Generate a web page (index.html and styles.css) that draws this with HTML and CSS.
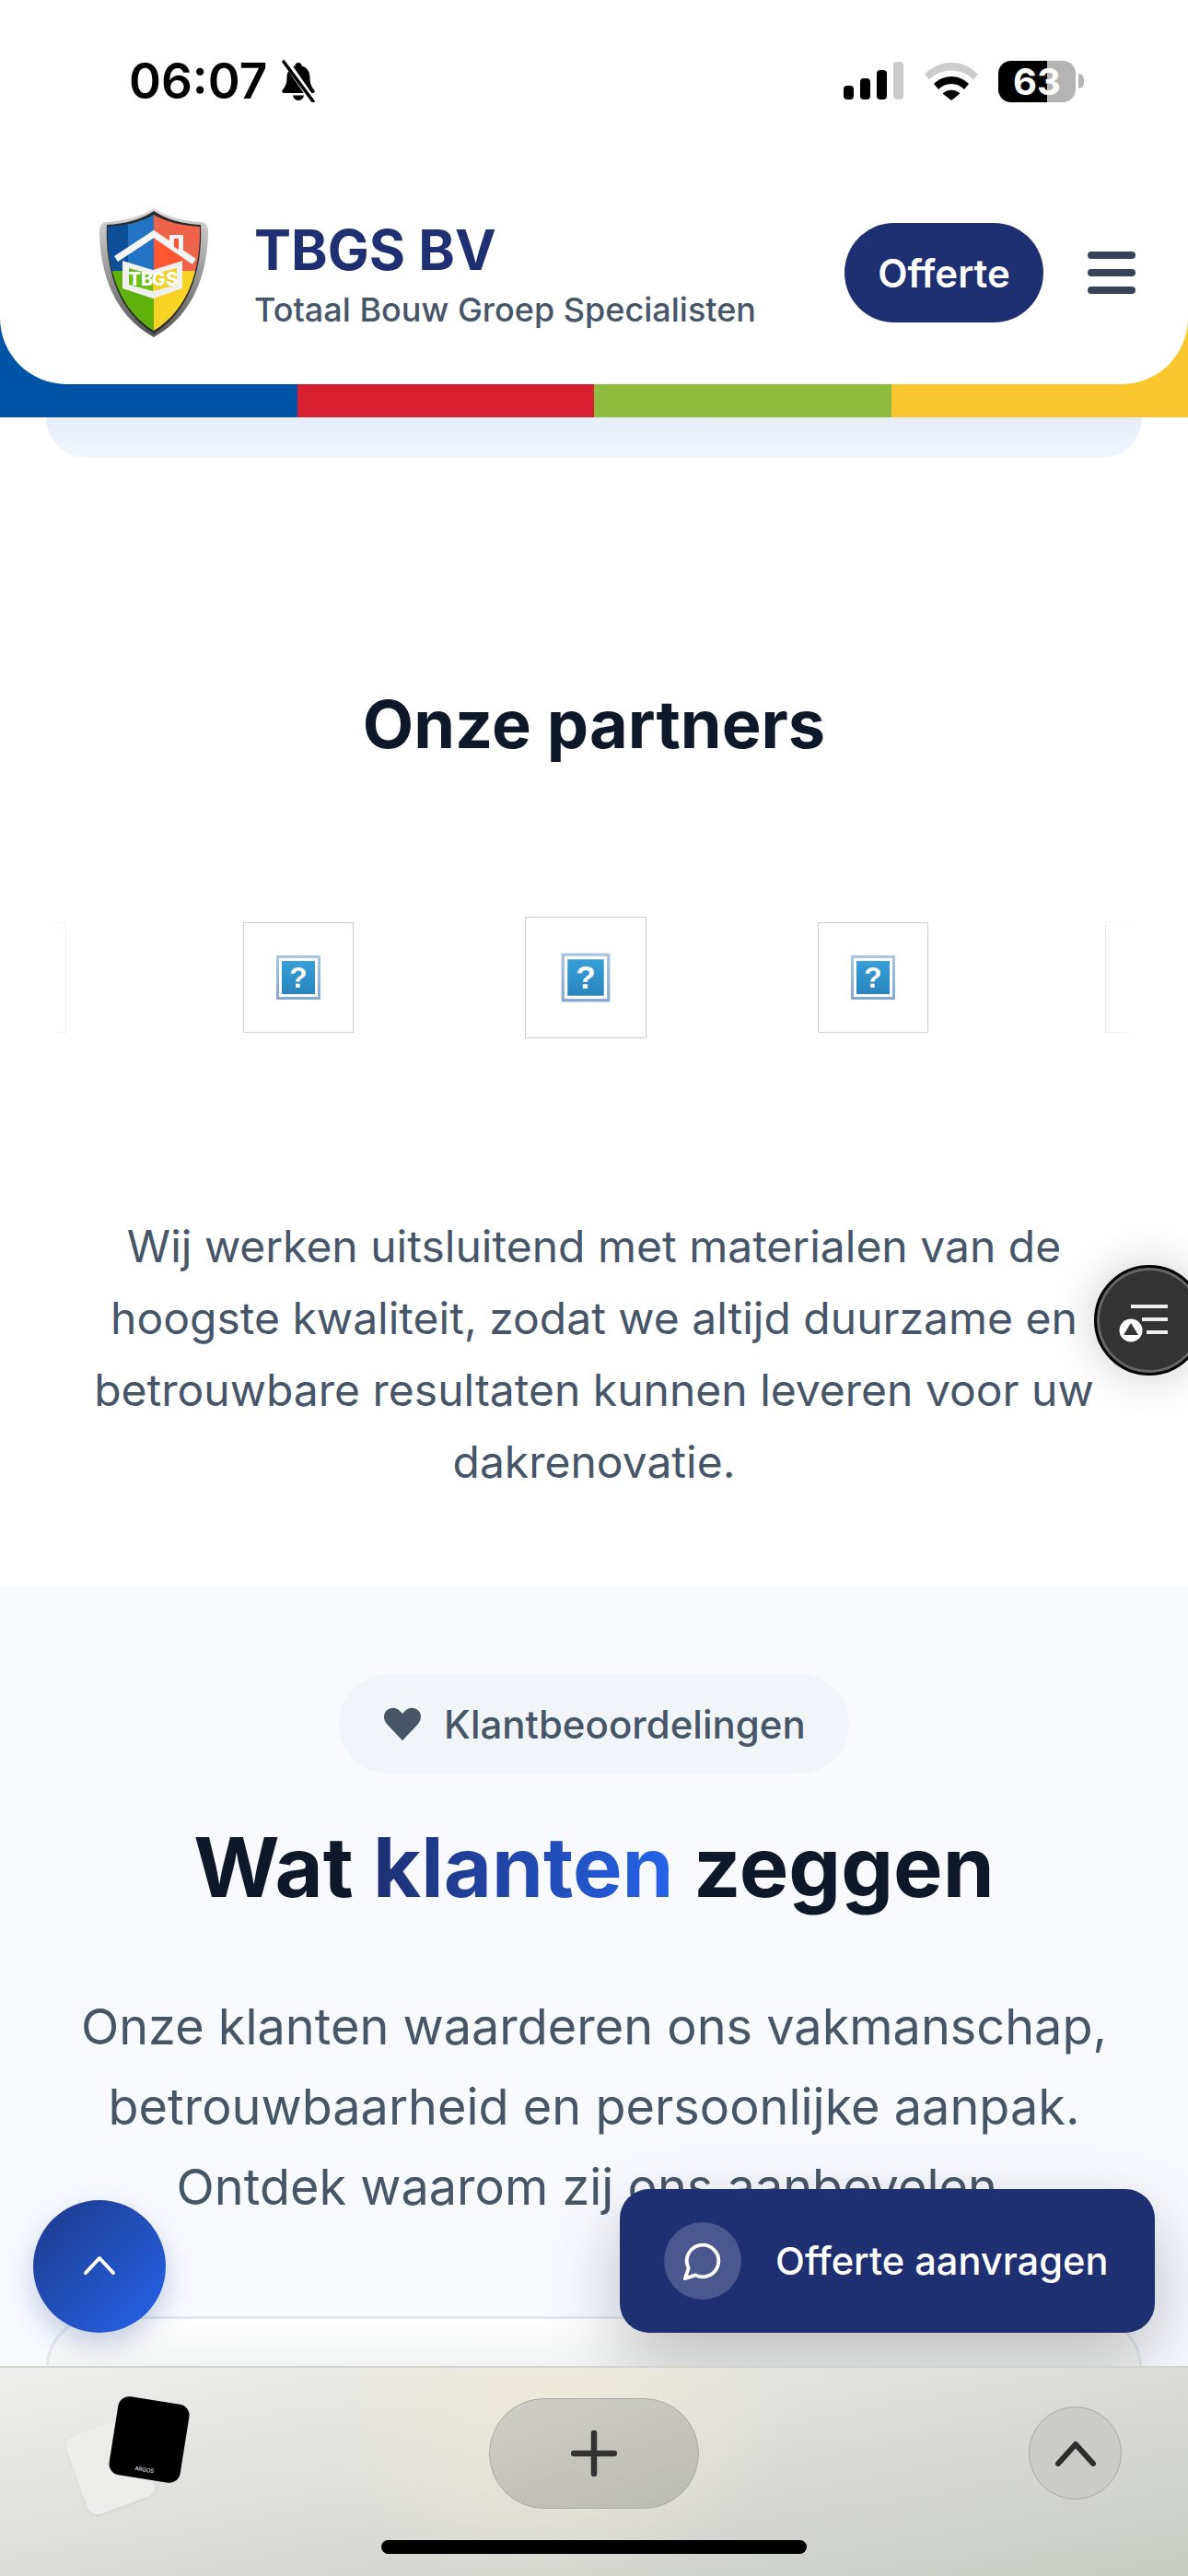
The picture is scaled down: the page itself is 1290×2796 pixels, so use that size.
FILE: index.html
```html
<!DOCTYPE html>
<html lang="nl">
<head>
    <meta charset="UTF-8">
    <meta name="viewport" content="width=device-width, initial-scale=1.0">
    <title>TBGS BV</title>
    <link rel="stylesheet" href="styles.css">
</head>
<body>
<div class="page">
    <div class="top-stripes">
        <header class="top">
            <div class="status-bar">
                <div class="status-left">
                    <span class="clock">06:07</span>
                    <svg class="bell" viewBox="0 0 44 46" width="44" height="46">
                        <path fill="#000" d="M22 3c-2 0-3.500 1.500-3.600 3.400C12.500 8 9.500 13 9.500 19c0 6-1.200 9.500-4.600 13.500-1.400 1.700-.4 3.500 1.600 3.500h31c2 0 3-1.800 1.600-3.500-3.400-4-4.600-7.500-4.600-13.500 0-6-3-11-8.900-12.600C25.500 4.500 24 3 22 3z"/>
                        <path fill="#000" d="M16 38.500c.6 3.400 3 5.500 6 5.500s5.400-2.100 6-5.500z"/>
                        <path stroke="#fff" stroke-width="7" d="M7 0l32 46"/>
                        <path stroke="#000" stroke-width="3.600" stroke-linecap="round" d="M6 2l32 43"/>
                    </svg>
                </div>
                <div class="status-right">
                    <svg viewBox="0 0 66 42" width="66" height="42">
                        <rect x="0" y="26" width="11" height="15" rx="4" fill="#000"/>
                        <rect x="18" y="18" width="11" height="23" rx="4" fill="#000"/>
                        <rect x="36" y="9" width="11" height="32" rx="4" fill="#000"/>
                        <rect x="54" y="0" width="11" height="41" rx="4" fill="#ccc"/>
                    </svg>
                    <svg class="wifi" viewBox="0 0 58 42" width="58" height="42">
                        <path fill="#ccc" d="M0 13.500C8 5.500 18 1 29 1s21 4.500 29 12.500l-5 6C46.500 13 38 9.500 29 9.500S11.500 13 5 19.500z"/>
                        <path fill="#000" d="M10 24c5-5 11.500-8 19-8s14 3 19 8l-5 6c-3.700-3.700-8.700-6-14-6s-10.300 2.300-14 6z"/>
                        <path fill="#000" d="M19.500 34.500c2.500-2.500 5.700-3.800 9.500-3.800s7 1.300 9.500 3.800L29 42z"/>
                    </svg>
                    <div class="battery">
                        <div class="battery-body"><span>63</span></div>
                        <div class="battery-nub"></div>
                    </div>
                </div>
            </div>
            <div class="brand-row">
                <svg class="logo" viewBox="0 0 118 140" width="118" height="140">
                    <defs>
                        <clipPath id="shield-clip">
                            <path d="M59 7C46 15 28 19 9 20 8 60 18 108 59 133 100 108 110 60 109 20 90 19 72 15 59 7z"/>
                        </clipPath>
                        <linearGradient id="rim" x1="0" y1="0" x2="0" y2="1">
                            <stop offset="0" stop-color="#d8d8d8"/>
                            <stop offset=".5" stop-color="#9a9a9a"/>
                            <stop offset="1" stop-color="#555"/>
                        </linearGradient>
                    </defs>
                    <path fill="url(#rim)" d="M59 0C46 9 26 14 7 15 2 16 0 19 0 27 1 72 16 116 59 140 102 116 117 72 118 27 118 19 116 16 111 15 92 14 72 9 59 0z"/>
                    <path fill="#2b2b2b" d="M59 3C46 12 28 17 8 18 6 60 17 110 59 136 101 110 112 60 110 18 90 17 72 12 59 3z"/>
                    <g clip-path="url(#shield-clip)">
                        <rect x="0" y="0" width="59" height="68" fill="#2273c4"/>
                        <rect x="0" y="0" width="31" height="68" fill="#0d4f98"/>
                        <rect x="59" y="0" width="59" height="68" fill="#ef6448"/>
                        <rect x="0" y="68" width="59" height="72" fill="#5fb20c"/>
                        <rect x="59" y="68" width="59" height="72" fill="#f8d326"/>
                        <path fill="#ff5630" d="M59 28l31 24v10L59 68z"/>
                    </g>
                    <path fill="none" stroke="#f4f4f4" stroke-width="7" d="M18 55L59 28 103 58"/>
                    <path fill="#f4f4f4" d="M76 29h15v24l-6-4-9-6z"/>
                    <path fill="#ff5630" d="M81 33h5v12l-5-3z"/>
                    <path fill="#f0f0f0" d="M25 57l33 10 32-10v30L58 98 25 87z"/>
                    <path fill="#6ebd12" d="M32 65l26 7v18l-26-7z"/>
                    <path fill="#f5cf1f" d="M58 72l26-7v18l-26 7z"/>
                    <text class="logo-text" x="45" y="84">TB</text>
                    <text class="logo-text" x="71" y="84">GS</text>
                </svg>
                <div class="brand-text">
                    <div class="brand-name">TBGS BV</div>
                    <div class="brand-sub">Totaal Bouw Groep Specialisten</div>
                </div>
                <button class="offer-btn">Offerte</button>
                <div class="burger"><span></span><span></span><span></span></div>
            </div>
        </header>
    </div>
    <div class="prev-card"></div>

    <section class="partners">
        <h2>Onze partners</h2>
        <div class="partner-track">
            <div class="partner-box"></div>
            <div class="partner-box"><div class="broken"><span>?</span></div></div>
            <div class="partner-box active"><div class="broken"><span>?</span></div></div>
            <div class="partner-box"><div class="broken"><span>?</span></div></div>
            <div class="partner-box"></div>
        </div>
        <p>Wij werken uitsluitend met materialen van de hoogste kwaliteit, zodat we altijd duurzame en betrouwbare resultaten kunnen leveren voor uw dakrenovatie.</p>
    </section>

    <section class="reviews">
        <div class="pill">
            <svg viewBox="0 0 24 24" width="46" height="46"><path fill="#475569" d="M12 21.500l-8.600-9.100C1 9.800 1 6.300 3.200 4.300c2.200-2 5.500-1.700 7.400.5L12 6.300l1.400-1.500c1.900-2.200 5.200-2.500 7.400-.5 2.200 2 2.200 5.500-.2 8.100z"/></svg>
            <span>Klantbeoordelingen</span>
        </div>
        <h2>Wat <span class="accent">klanten</span> zeggen</h2>
        <p>Onze klanten waarderen ons vakmanschap, betrouwbaarheid en persoonlijke aanpak. Ontdek waarom zij ons aanbevelen.</p>
        <div class="review-card"></div>
    </section>

    <div class="float-menu">
        <svg viewBox="0 0 64 56" width="64" height="56">
            <path stroke="#eee" stroke-width="4" d="M14 5h40M26 19h28M31 33h23"/>
            <circle cx="14" cy="31" r="12.500" fill="#fff"/>
            <path fill="#333" d="M14 23l8 13H6z"/>
        </svg>
    </div>

    <button class="to-top">
        <svg viewBox="0 0 36 22" width="36" height="22"><path fill="none" stroke="#fff" stroke-width="4" stroke-linecap="round" stroke-linejoin="round" d="M3 19L18 3l15 16"/></svg>
    </button>

    <button class="quote-btn">
        <span class="quote-icon">
            <svg viewBox="0 0 24 24" width="46" height="46"><path fill="none" stroke="#fff" stroke-width="2" stroke-linecap="round" stroke-linejoin="round" d="M7.900 20A9 9 0 1 0 4 16.100L2 22z"/></svg>
        </span>
        <span>Offerte aanvragen</span>
    </button>

    <div class="browser-bar">
        <div class="tabs-icon">
            <div class="tab-white"></div>
            <div class="tab-black"><span>ARGOS</span></div>
        </div>
        <div class="plus-btn">
            <svg viewBox="0 0 50 50" width="50" height="50"><path stroke="#333" stroke-width="6.500" stroke-linecap="round" d="M25 3v44M3 25h44"/></svg>
        </div>
        <div class="chevron-btn">
            <svg viewBox="0 0 44 28" width="44" height="28"><path fill="none" stroke="#2d2d2d" stroke-width="6" stroke-linecap="round" stroke-linejoin="round" d="M3 25L22 4l19 21"/></svg>
        </div>
        <div class="home-bar"></div>
    </div>
</div>
</body>
</html>
```

FILE: styles.css
```css
* {
    box-sizing: border-box;
}
body {
    margin: 0;
    font-family: Inter, "Liberation Sans", sans-serif;
    background-color: white;
}
.page {
    position: relative;
    width: 1290px;
    height: 2796px;
    overflow: hidden;
    background-color: white;
}

/* header */
.top-stripes {
    height: 453px;
    background: linear-gradient(90deg, #0054a6 0 323px, #d71f30 323px 645px, #8fbb3f 645px 968px, #f9c62d 968px 100%);
}
.top {
    height: 417px;
    padding-top: 56px;
    background-color: white;
    border-radius: 0 0 72px 72px;
}
.status-bar {
    display: flex;
    justify-content: space-between;
    align-items: center;
    height: 64px;
    padding: 0 113px 0 140px;
}
.status-left {
    display: flex;
    align-items: center;
    gap: 12px;
}
.clock {
    font-size: 53px;
    font-weight: 600;
    color: black;
}
.status-right {
    display: flex;
    align-items: center;
    gap: 22px;
}
.battery {
    display: flex;
    align-items: center;
    gap: 3px;
}
.battery-body {
    width: 84px;
    height: 45px;
    border-radius: 14px;
    background: linear-gradient(90deg, black 0 63%, #b4b4b4 63% 100%);
    color: white;
    font-size: 40px;
    font-weight: 700;
    display: flex;
    align-items: center;
    justify-content: center;
}
.battery-nub {
    width: 6px;
    height: 16px;
    border-radius: 0 6px 6px 0;
    background-color: #b4b4b4;
}
.brand-row {
    display: flex;
    align-items: center;
    padding: 106px 57px 0 108px;
}
.logo {
    flex: none;
}
.logo-text {
    fill: white;
    font-size: 20px;
    font-weight: 800;
    text-anchor: middle;
}
.brand-text {
    margin-left: 50px;
    padding-top: 3px;
    flex: 1;
}
.brand-name {
    font-size: 60px;
    font-weight: 700;
    color: #1e2f72;
    line-height: 72px;
}
.brand-sub {
    font-size: 36px;
    font-weight: 500;
    color: #475569;
    line-height: 48px;
    margin-top: 5px;
}
.offer-btn {
    width: 216px;
    height: 108px;
    border: none;
    border-radius: 54px;
    background-color: #1e2f72;
    color: white;
    font-family: inherit;
    font-size: 42px;
    font-weight: 600;
}
.burger {
    display: flex;
    flex-direction: column;
    gap: 11px;
    width: 52px;
    margin-left: 48px;
}
.burger span {
    height: 8px;
    border-radius: 4px;
    background-color: #374357;
}
.prev-card {
    height: 44px;
    margin: 0 50px;
    border-radius: 0 0 64px 64px;
    background: linear-gradient(180deg, #e6edf6, #f0f6fd);
}

/* partners */
.partners {
    height: 1225px;
    padding-top: 243px;
    text-align: center;
}
.partners h2 {
    margin: 0;
    font-size: 72px;
    font-weight: 700;
    line-height: 92px;
    color: #0f172a;
}
.partner-track {
    display: flex;
    justify-content: center;
    gap: 192px;
    width: 1186px;
    margin: 161px 0 0 52px;
    padding: 8px 18px 8px 0;
    overflow: hidden;
    -webkit-mask-image: linear-gradient(90deg, transparent 0, white 70px, white 1100px, transparent 1186px);
    mask-image: linear-gradient(90deg, transparent 0, white 70px, white 1100px, transparent 1186px);
}
.partner-box {
    flex: none;
    width: 120px;
    height: 120px;
    border: 1px solid #cdcdcd;
    display: flex;
    align-items: center;
    justify-content: center;
}
.partner-box.active {
    transform: scale(1.1);
}
.broken {
    width: 48px;
    height: 48px;
    padding: 3px;
    background: linear-gradient(180deg, #a9c6e4, #84a7d1);
}
.broken span {
    display: block;
    height: 42px;
    border: 3px solid white;
    background: linear-gradient(180deg, #37a0d6, #2a84be);
    background-clip: padding-box;
    color: white;
    font-family: "Liberation Sans", sans-serif;
    font-size: 32px;
    font-weight: 700;
    line-height: 36px;
}
.partners p {
    margin: 185px auto 0;
    width: 1110px;
    font-size: 48px;
    line-height: 78px;
    color: #475569;
}

/* reviews */
.reviews {
    height: 1100px;
    padding-top: 95px;
    background-color: #f8faff;
    text-align: center;
}
.pill {
    display: inline-flex;
    align-items: center;
    gap: 22px;
    height: 108px;
    width: 554px;
    padding-left: 46px;
    border-radius: 54px;
    background-color: #f1f5f9;
    font-size: 42px;
    font-weight: 500;
    color: #475569;
}
.reviews h2 {
    margin: 42px 0 0;
    font-size: 90px;
    font-weight: 700;
    line-height: 120px;
    color: #0f172a;
}
.accent {
    background: linear-gradient(90deg, #1e2f72, #2563eb);
    -webkit-background-clip: text;
    background-clip: text;
    color: transparent;
}
.reviews p {
    margin: 69px auto 0;
    width: 1160px;
    font-size: 54px;
    line-height: 87px;
    color: #475569;
}
.review-card {
    height: 300px;
    margin: 97px 50px 0;
    border: 3px solid #e2e8f0;
    border-radius: 56px;
    background: linear-gradient(180deg, white, #f3f4f4 48px);
}

/* floating stuff */
.float-menu {
    position: absolute;
    left: 1188px;
    top: 1373px;
    width: 120px;
    height: 120px;
    border-radius: 50%;
    border: 3px solid black;
    box-shadow: inset 0 0 0 3px #666, 0 0 50px rgba(0,0,0,0.2);
    background-color: #333;
    padding: 37px 0 0 23px;
}
.float-menu svg {
    display: block;
}
.to-top {
    position: absolute;
    left: 36px;
    top: 2388px;
    width: 144px;
    height: 144px;
    border: none;
    border-radius: 50%;
    background: linear-gradient(135deg, #1e3a8a, #2563eb);
    box-shadow: 0 12px 30px rgba(30,58,138,0.25);
}
.quote-btn {
    position: absolute;
    left: 673px;
    top: 2376px;
    width: 581px;
    height: 156px;
    border: none;
    border-radius: 32px;
    background-color: #1e2f72;
    box-shadow: 0 30px 80px rgba(0,0,0,0.25);
    color: white;
    font-family: inherit;
    font-size: 41.6px;
    font-weight: 500;
    display: flex;
    align-items: center;
    gap: 37px;
    padding-left: 48px;
}
.quote-icon {
    width: 84px;
    height: 84px;
    border-radius: 50%;
    background-color: rgba(255,255,255,0.2);
    display: flex;
    align-items: center;
    justify-content: center;
}
.browser-bar {
    position: absolute;
    left: 0;
    right: 0;
    bottom: 0;
    height: 228px;
    border-top: 2px solid #d2d2ce;
    background:
        radial-gradient(ellipse 260px 220px at 600px 30px, rgba(240,235,215,0.8), transparent),
        linear-gradient(170deg, #eeeeec, #c9cbc5);
}
.tabs-icon {
    position: absolute;
    left: 60px;
    top: 20px;
    width: 160px;
    height: 150px;
}
.tab-white {
    position: absolute;
    left: 21px;
    top: 42px;
    width: 78px;
    height: 90px;
    border-radius: 12px;
    background-color: #ececeb;
    box-shadow: 0 1px 3px rgba(0,0,0,0.08);
    transform: rotate(-20deg);
}
.tab-black {
    position: absolute;
    left: 63px;
    top: 15px;
    width: 78px;
    height: 86px;
    border-radius: 12px;
    background-color: black;
    transform: rotate(9deg);
    color: white;
    font-size: 6px;
    text-align: center;
    padding-top: 72px;
}
.plus-btn {
    position: absolute;
    left: 531px;
    top: 33px;
    width: 228px;
    height: 120px;
    border-radius: 60px;
    border: 1px solid #a9a9a3;
    background: linear-gradient(160deg, #cfcfc7, #babab4);
    display: flex;
    align-items: center;
    justify-content: center;
}
.chevron-btn {
    position: absolute;
    left: 1117px;
    top: 42px;
    width: 101px;
    height: 101px;
    border-radius: 50%;
    border: 1px solid #a9a9a3;
    background-color: #cbcbc8;
    display: flex;
    align-items: center;
    justify-content: center;
}
.home-bar {
    position: absolute;
    left: 414px;
    top: 187px;
    width: 462px;
    height: 15px;
    border-radius: 8px;
    background-color: black;
}
```
